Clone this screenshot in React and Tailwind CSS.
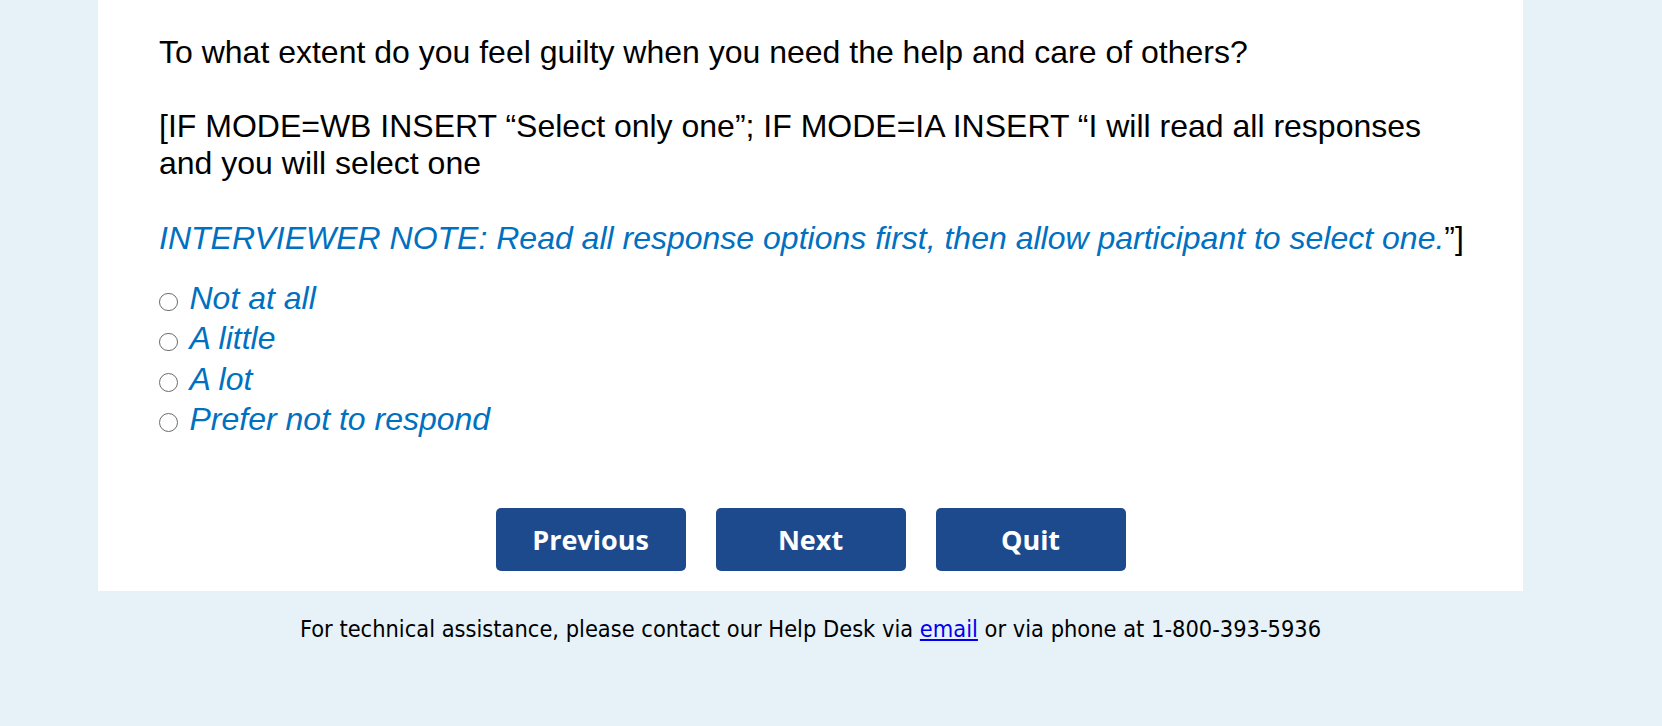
export default function App() {
  const options = ["Not at all", "A little", "A lot", "Prefer not to respond"];
  return (
    <div className="min-h-screen bg-[#e6f2f8]">
      <div className="ml-[98px] w-[1425px]">
        <div className="bg-white pt-[34px] pb-[20px]">
          <div className="pl-[61px] pr-[30px] text-[32px] leading-[37px] text-black font-['Liberation_Sans',Arial,sans-serif]">
            <div>
              To what extent do you feel guilty when you need the help and care of others?
              <br />
              <br />
              [IF MODE=WB INSERT “Select only one”; IF MODE=IA INSERT “I will read all responses
              <br />
              and you will select one
            </div>
            <div className="mt-[38px]">
              <span className="italic text-[#0070c0]">
                INTERVIEWER NOTE: Read all response options first, then allow participant to select one.
              </span>
              ”]
            </div>
            <div className="mt-[21px]">
              {options.map((o) => (
                <div key={o} className="flex items-start h-[40.33px] leading-[40px]">
                  <span className="mt-[14.5px] w-[18.5px] h-[18.5px] shrink-0 rounded-full border-[1.5px] border-[#6c6c6c] bg-white" />
                  <span className="ml-[12px] italic text-[#0070c0]">{o}</span>
                </div>
              ))}
            </div>
          </div>
          <div className="mt-[69px] flex justify-center gap-[30px]">
            {["Previous", "Next", "Quit"].map((b) => (
              <button
                key={b}
                className="w-[190px] h-[63px] rounded-[5px] bg-[#1d4a8c] text-white text-[27px] font-bold flex items-center justify-center font-['Open_Sans',sans-serif]"
              >
                {b}
              </button>
            ))}
          </div>
        </div>
        <div className="mt-[24px] text-center text-[23.4px] leading-[29px] text-black font-['DejaVu_Sans_Condensed','DejaVu_Sans',sans-serif]">
          For technical assistance, please contact our Help Desk via{" "}
          <a href="#" className="text-[#0000ee] underline">email</a> or via phone at 1-800-393-5936
        </div>
      </div>
    </div>
  );
}
